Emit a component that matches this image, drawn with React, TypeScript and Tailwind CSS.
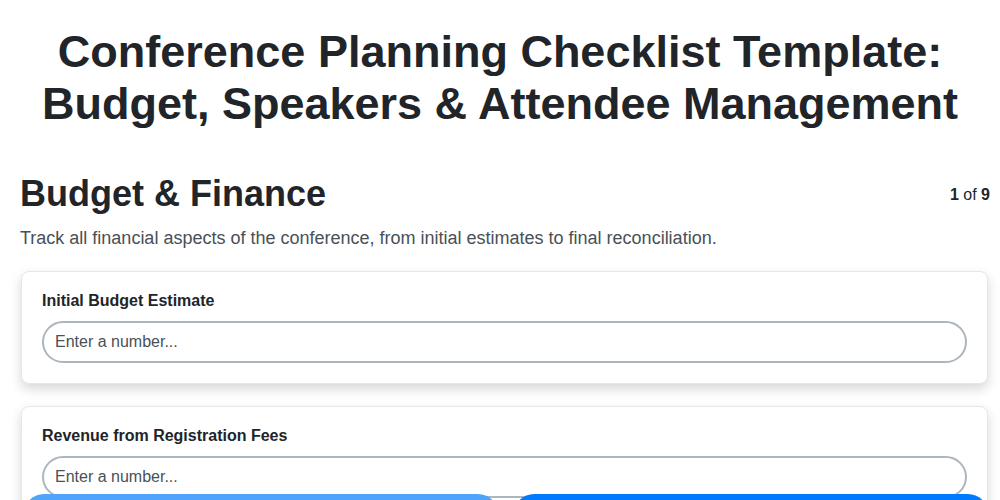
const fields = [
  { label: "Initial Budget Estimate" },
  { label: "Revenue from Registration Fees" },
  { label: "Sponsorship Revenue" },
];

export default function App() {
  return (
    <div className="h-screen overflow-hidden bg-white font-['Liberation_Sans',Arial,sans-serif] text-[#212529]">
      <h1 className="px-5 pt-[26px] text-center text-[45px] font-bold leading-[52px]">
        Conference Planning Checklist Template: Budget, Speakers &amp; Attendee
        Management
      </h1>

      <div className="pl-5 pr-[10px] pb-24">
        <div className="mt-[42px] flex items-start justify-between">
          <h2 className="text-[36px] font-bold leading-[44px]">Budget &amp; Finance</h2>
          <div className="pt-[11px] text-base">
            <span className="font-bold">1</span> of <span className="font-bold">9</span>
          </div>
        </div>
        <p className="mt-[10px] text-[18px] leading-6 text-[#495057]">
          Track all financial aspects of the conference, from initial estimates to
          final reconciliation.
        </p>

        {/* Fields */}
        <div className="mt-[21px] mr-[2px] ml-px flex flex-col gap-[22px]">
          {fields.map((f) => (
            <div
              key={f.label}
              className="rounded-lg border border-[#e6e6ec] bg-white px-5 pt-[19px] pb-[20px] shadow-[0_5px_12px_rgba(0,0,0,0.16)]"
            >
              <label className="block text-base font-bold leading-5">{f.label}</label>
              <input
                type="text"
                placeholder="Enter a number..."
                className="mt-[10px] h-[42px] w-full rounded-full border-2 border-[#adb5bd] bg-white px-[11px] text-base text-[#495057] placeholder:text-[#495057] outline-none"
              />
            </div>
          ))}
        </div>
      </div>

      {/* Bottom nav */}
      <div className="fixed left-0 right-0 top-[494px] grid grid-cols-2 gap-4 pl-6 pr-3">
        <button className="h-12 rounded-t-[20px] bg-[#4fa3fb] text-white font-bold">
          Previous
        </button>
        <button className="h-12 rounded-t-[20px] bg-[#007bff] text-white font-bold">
          Next
        </button>
      </div>
    </div>
  );
}
